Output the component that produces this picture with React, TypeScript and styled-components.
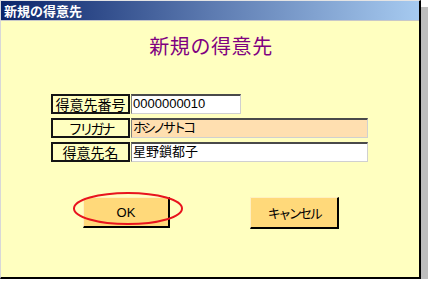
import React from "react";
import styled, { createGlobalStyle } from "styled-components";

const Global = createGlobalStyle`
  html, body { margin: 0; padding: 0; background: #ffffff; }
  body { font-family: "Noto Sans CJK JP", "Liberation Sans", sans-serif; }
  * { box-sizing: border-box; }
`;

const JP = `"Noto Sans CJK JP", sans-serif`;

const Window = styled.div`
  width: 421px;
  height: 279px;
  background: #ffffc0;
  border-top: 1px solid #e4e4e4;
  border-left: 1px solid #d8d8d8;
  border-right: 2px solid #000000;
  border-bottom: 2px solid #000000;
  box-shadow: 7px 7px 0 #bdbdbd;
  display: flex;
  flex-direction: column;
`;

const TitleBar = styled.div`
  height: 20px;
  flex: none;
  background: linear-gradient(to right, #0a246a 0%, #5c7ab0 50%, #a6caf0 100%);
  border-bottom: 1px solid #c8c8c8;
  color: #ffffff;
  font-family: ${JP};
  font-weight: 700;
  font-size: 13px;
  line-height: 19px;
  padding-left: 3px;
  letter-spacing: 0;
`;

const Body = styled.div`
  flex: 1;
  display: flex;
  flex-direction: column;
`;

const Heading = styled.div`
  margin-top: 15px;
  text-align: center;
  color: #800080;
  font-family: ${JP};
  font-size: 20px;
  line-height: 20px;
  letter-spacing: 0.6px;
  padding-left: 2px;
`;

const Form = styled.div`
  margin-top: 38px;
  margin-left: 50px;
  display: flex;
  flex-direction: column;
  gap: 4px;
`;

const Row = styled.div`
  display: flex;
  gap: 1px;
  height: 20px;
`;

const Label = styled.div`
  width: 79px;
  border: 2px solid #141414;
  background: #ffffc0;
  color: #000000;
  font-family: ${JP};
  font-size: 14px;
  line-height: 16px;
  text-align: center;
  white-space: nowrap;
  letter-spacing: ${(p: { $ls?: number }) => p.$ls ?? 0}px;
`;

const Field = styled.div<{ $w: number; $bg: string; $ls?: number }>`
  width: ${(p) => p.$w}px;
  background: ${(p) => p.$bg};
  border-top: 2px solid #4a4a4a;
  border-left: 1px solid #808080;
  border-right: 1px solid #d0d0d0;
  border-bottom: 1px solid #d0d0d0;
  color: #000000;
  font-family: "Liberation Sans", ${JP};
  font-size: 13px;
  line-height: 16px;
  padding-left: 1px;
  white-space: nowrap;
  overflow: hidden;
  letter-spacing: ${(p) => p.$ls ?? 0}px;
`;

const Buttons = styled.div`
  margin-top: 35px;
  margin-left: 82px;
  display: flex;
  align-items: flex-start;
  gap: 80px;
`;

const ButtonWrap = styled.div`
  position: relative;
`;

const Button = styled.div<{ $w: number; $h: number; $ls?: number }>`
  width: ${(p) => p.$w}px;
  height: ${(p) => p.$h}px;
  background: #ffd97a;
  border-top: 1px solid #fff0c0;
  border-left: 1px solid #fff0c0;
  border-right: 2px solid #000000;
  border-bottom: 2px solid #000000;
  display: flex;
  align-items: center;
  justify-content: center;
  font-family: "Liberation Sans", ${JP};
  font-size: 13px;
  color: #000000;
  letter-spacing: ${(p) => p.$ls ?? 0}px;
`;

const Ring = styled.svg`
  position: absolute;
  left: -10px;
  top: -5px;
  overflow: visible;
  pointer-events: none;
`;

export default function App() {
  return (
    <>
      <Global />
      <Window>
        <TitleBar>新規の得意先</TitleBar>
        <Body>
          <Heading>新規の得意先</Heading>
          <Form>
            <Row>
              <Label>得意先番号</Label>
              <Field $w={110} $bg="#ffffff">0000000010</Field>
            </Row>
            <Row>
              <Label $ls={-3}>フリガナ</Label>
              <Field $w={237} $bg="#ffdfb0" $ls={-3}>ホシノサトコ</Field>
            </Row>
            <Row>
              <Label>得意先名</Label>
              <Field $w={237} $bg="#ffffff">星野鎖都子</Field>
            </Row>
          </Form>
          <Buttons>
            <ButtonWrap>
              <Button $w={87} $h={31}>OK</Button>
              <Ring width="110" height="33" viewBox="0 0 110 33">
                <ellipse cx="55" cy="16.5" rx="54" ry="15.5" fill="none" stroke="#e8141e" strokeWidth="2" />
              </Ring>
            </ButtonWrap>
            <ButtonWrap>
              <Button $w={89} $h={32} $ls={-2.5}>キャンセル</Button>
            </ButtonWrap>
          </Buttons>
        </Body>
      </Window>
    </>
  );
}
